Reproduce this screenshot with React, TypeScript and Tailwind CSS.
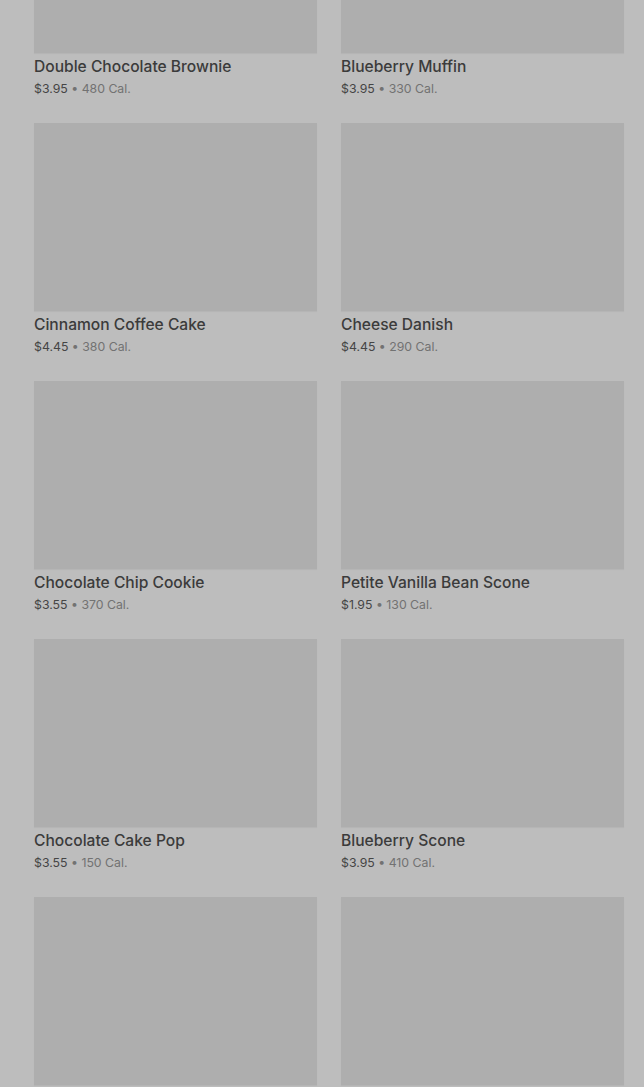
import React from "react";

const items = [
  { name: "Double Chocolate Brownie", price: "$3.95", cal: "480 Cal." },
  { name: "Blueberry Muffin", price: "$3.95", cal: "330 Cal." },
  { name: "Cinnamon Coffee Cake", price: "$4.45", cal: "380 Cal." },
  { name: "Cheese Danish", price: "$4.45", cal: "290 Cal." },
  { name: "Chocolate Chip Cookie", price: "$3.55", cal: "370 Cal." },
  { name: "Petite Vanilla Bean Scone", price: "$1.95", cal: "130 Cal." },
  { name: "Chocolate Cake Pop", price: "$3.55", cal: "150 Cal." },
  { name: "Blueberry Scone", price: "$3.95", cal: "410 Cal." },
  { name: "Chocolate Croissant", price: "$3.75", cal: "300 Cal." },
  { name: "Butter Croissant", price: "$3.45", cal: "260 Cal." },
];

export default function App() {
  return (
    <div className="h-[1087px] w-[644px] overflow-hidden bg-[#bdbdbd]" style={{ fontFamily: "Inter, 'Noto Sans', sans-serif" }}>
      <div className="-mt-[135px] grid grid-cols-[283px_283px] gap-x-[24px] pl-[34px] pr-[20px]">
        {items.map((it) => (
          <div key={it.name} className="mb-[24px]">
            <div className="h-[188px] bg-[#aeaeae] shadow-[0_1px_1px_rgba(0,0,0,0.04)]" />
            <div className="pt-[4px] text-[15.6px] leading-[20px] font-medium text-[#3b3b3b]">{it.name}</div>
            <div className="mt-[2px] text-[12.3px] leading-[20px] text-[#727272]">
              <span className="text-[#454545]">{it.price}</span> • {it.cal}
            </div>
          </div>
        ))}
      </div>
    </div>
  );
}
